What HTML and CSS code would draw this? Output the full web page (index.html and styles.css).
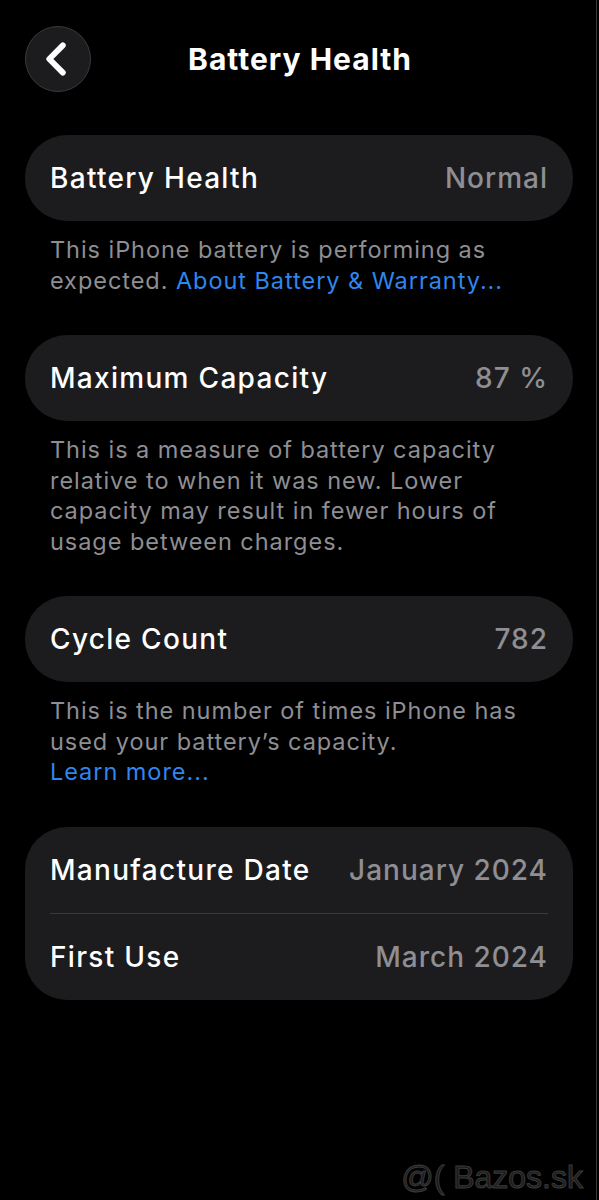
FILE: index.html
```html
<!DOCTYPE html>
<html lang = 'en'>
<head>
    <meta charset = 'UTF-8'>
    <title>Battery Health</title>
    <link rel="stylesheet" href="styles.css">
</head>

<body>
    <div class = 'screen'>
        <div class = 'nav'>
            <div class = 'back-btn'>
                <svg width = '66' height = '66' viewBox = '0 0 66 66'>
                    <path d = 'M38 19 L24 33 L38 47' fill = 'none' stroke = '#fff' stroke-width = '6' stroke-linecap = 'round' stroke-linejoin = 'round'/>
                </svg>
            </div>
            <h1 class = 'nav-title'>Battery Health</h1>
        </div>

        <div class = 'card'>
            <div class = 'row'>
                <span class = 'label'>Battery Health</span>
                <span class = 'value'>Normal</span>
            </div>
        </div>
        <p class = 'note'>This iPhone battery is performing as expected. <a class = 'link'>About Battery &amp; Warranty...</a></p>

        <div class = 'card'>
            <div class = 'row'>
                <span class = 'label'>Maximum Capacity</span>
                <span class = 'value'>87 %</span>
            </div>
        </div>
        <p class = 'note'>This is a measure of battery capacity relative to when it was new. Lower capacity may result in fewer hours of usage between charges.</p>

        <div class = 'card'>
            <div class = 'row'>
                <span class = 'label'>Cycle Count</span>
                <span class = 'value'>782</span>
            </div>
        </div>
        <p class = 'note'>This is the number of times iPhone has used your battery’s capacity.<br><a class = 'link'>Learn more...</a></p>

        <div class = 'card'>
            <div class = 'row'>
                <span class = 'label'>Manufacture Date</span>
                <span class = 'value'>January 2024</span>
            </div>
            <div class = 'divider'></div>
            <div class = 'row'>
                <span class = 'label'>First Use</span>
                <span class = 'value'>March 2024</span>
            </div>
        </div>

        <div class = 'watermark'>@( Bazos.sk</div>
    </div>
</body>
</html>
```

FILE: styles.css
```css
body {
    margin : 0;
    background-color : #000;
    font-family : Inter, "Noto Sans", sans-serif;
    color : #fff;
}

.screen {
    position : relative;
    width : 597px;
    height : 1200px;
    border-right : 1px solid #3a3a3a;
    padding : 26px 0 0 25px;
    box-sizing : border-box;
    overflow : hidden;
}

.nav {
    display : flex;
    align-items : center;
    height : 66px;
    width : 548px;
    position : relative;
}

.back-btn {
    width : 64px;
    height : 64px;
    border-radius : 50%;
    background-color : #1c1c1e;
    border : 1px solid #3a3a3c;
    display : flex;
    align-items : center;
    justify-content : center;
}

.back-btn svg {
    width : 64px;
    height : 64px;
}

.nav-title {
    flex : 1;
    margin : 0 64px 0 0;
    text-align : center;
    font-size : 30px;
    font-weight : 700;
    letter-spacing : 1px;
}

.card {
    width : 548px;
    background-color : #1c1c1e;
    border-radius : 42px;
    margin-top : 43px;
}

.row {
    display : flex;
    justify-content : space-between;
    align-items : center;
    height : 86px;
    padding : 0 25px;
}

.label {
    font-size : 28px;
    font-weight : 500;
    letter-spacing : 1.3px;
}

.value {
    font-size : 28px;
    font-weight : 500;
    color : #8e8e93;
    letter-spacing : 1px;
}

.divider {
    height : 1px;
    margin : 0 25px;
    background-color : #3a3a3c;
}

.note {
    margin : 14px 0 -4px 0;
    padding : 0 25px;
    width : 548px;
    box-sizing : border-box;
    font-size : 23.5px;
    line-height : 30.5px;
    color : #8e8e93;
    letter-spacing : 0.95px;
}

.link {
    color : #2f86ee;
}

.watermark {
    position : absolute;
    right : 13px;
    bottom : 4px;
    font-family : "Liberation Sans", Arial, sans-serif;
    font-size : 32px;
    color : #1a1a1a;
    -webkit-text-stroke : 1px #3a3a3a;
}
```
